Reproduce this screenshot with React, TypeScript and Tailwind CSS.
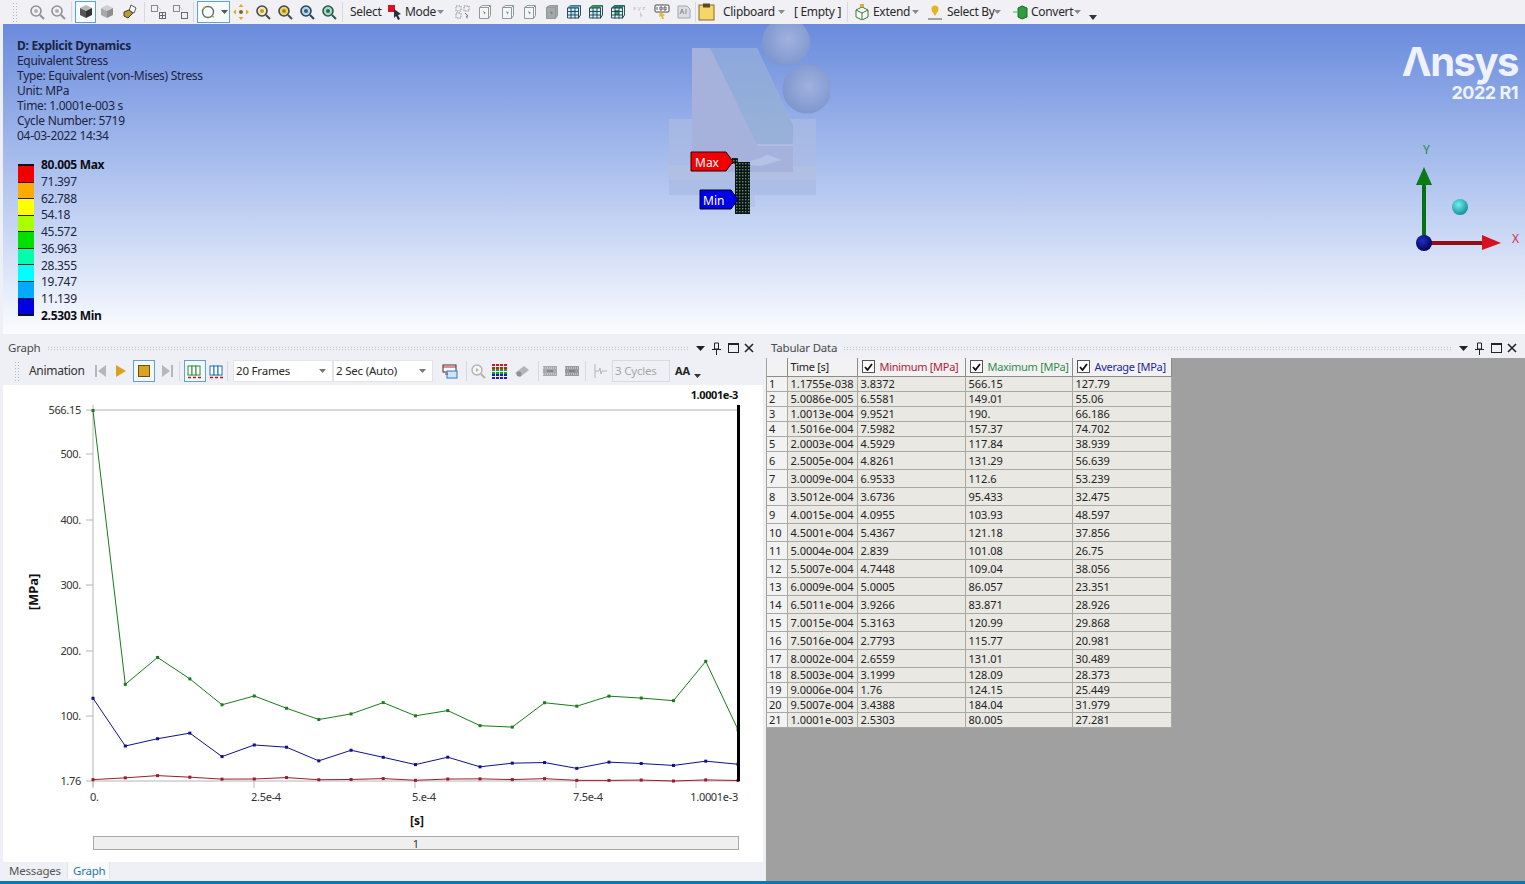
import React from 'react';

// time, min, max, avg
const rows: string[][] = [
  ['1.1755e-038', '3.8372', '566.15', '127.79'],
  ['5.0086e-005', '6.5581', '149.01', '55.06'],
  ['1.0013e-004', '9.9521', '190.', '66.186'],
  ['1.5016e-004', '7.5982', '157.37', '74.702'],
  ['2.0003e-004', '4.5929', '117.84', '38.939'],
  ['2.5005e-004', '4.8261', '131.29', '56.639'],
  ['3.0009e-004', '6.9533', '112.6', '53.239'],
  ['3.5012e-004', '3.6736', '95.433', '32.475'],
  ['4.0015e-004', '4.0955', '103.93', '48.597'],
  ['4.5001e-004', '5.4367', '121.18', '37.856'],
  ['5.0004e-004', '2.839', '101.08', '26.75'],
  ['5.5007e-004', '4.7448', '109.04', '38.056'],
  ['6.0009e-004', '5.0005', '86.057', '23.351'],
  ['6.5011e-004', '3.9266', '83.871', '28.926'],
  ['7.0015e-004', '5.3163', '120.99', '29.868'],
  ['7.5016e-004', '2.7793', '115.77', '20.981'],
  ['8.0002e-004', '2.6559', '131.01', '30.489'],
  ['8.5003e-004', '3.1999', '128.09', '28.373'],
  ['9.0006e-004', '1.76', '124.15', '25.449'],
  ['9.5007e-004', '3.4388', '184.04', '31.979'],
  ['1.0001e-003', '2.5303', '80.005', '27.281'],
];

const legend = [
  { v: '80.005 Max', bold: true },
  { v: '71.397' },
  { v: '62.788' },
  { v: '54.18' },
  { v: '45.572' },
  { v: '36.963' },
  { v: '28.355' },
  { v: '19.747' },
  { v: '11.139' },
  { v: '2.5303 Min', bold: true },
];

const legendColors = ['#f00000', '#ffaa00', '#ffff00', '#aaff00', '#00e000', '#00ffaa', '#00ffff', '#00aaff', '#0000e0'];

const px = (t: string) => 93 + (parseFloat(t) / 1.0001e-3) * 645;
const py = (v: string) => 781 - (parseFloat(v) - 1.76) * 0.6564;

const Svg = ({ children, w = 16, h = 16 }: { children: React.ReactNode; w?: number; h?: number }) => (
  <svg width={w} height={h} viewBox={`0 0 ${w} ${h}`} className="block shrink-0">
    {children}
  </svg>
);

const Slot = ({ children, className = 'w-[22px]' }: { children: React.ReactNode; className?: string }) => (
  <div className={`flex h-full shrink-0 items-center justify-center ${className}`}>{children}</div>
);

const Sep = ({ className = '' }: { className?: string }) => <div className={`h-[20px] w-px shrink-0 bg-[#d8d8de] ${className}`} />;

const Caret = ({ color = '#8a8a8a' }: { color?: string }) => (
  <svg width="7" height="4" viewBox="0 0 7 4" className="shrink-0">
    <path d="M0 0h7L3.5 4z" fill={color} />
  </svg>
);

const Grip = () => (
  <svg width="6" height="20" className="shrink-0">
    {[1, 4, 7, 10, 13, 16, 19].map((y) => (
      <g key={y} fill="#b9b9bf">
        <rect x="0" y={y} width="1" height="1" />
        <rect x="3" y={y} width="1" height="1" />
      </g>
    ))}
  </svg>
);

const Lens = ({ ring = '#8f9193', fill = '#f2f2f2', dot = '#b0b0b0' }: { ring?: string; fill?: string; dot?: string }) => (
  <Svg>
    <circle cx="7" cy="7" r="5" fill={fill} stroke={ring} strokeWidth="1.6" />
    <circle cx="7" cy="7" r="2" fill={dot} />
    <path d="M11 11l4 4" stroke={ring} strokeWidth="2" />
  </Svg>
);

const Cube = ({ top, left, right }: { top: string; left: string; right: string }) => (
  <Svg>
    <path d="M8 1l6 3-6 3-6-3z" fill={top} />
    <path d="M2 4l6 3v7l-6-3z" fill={left} />
    <path d="M14 4l-6 3v7l6-3z" fill={right} />
  </Svg>
);

const SelBoxes = ({ grid }: { grid?: boolean }) => (
  <Svg>
    <rect x="1.5" y="1.5" width="6" height="6" fill="none" stroke="#8a8a8a" />
    <path d="M8 3l3 3" stroke="#c8c8c8" />
    <rect x="9.5" y="8.5" width="6" height="6" fill="none" stroke="#6a6a6a" />
    {grid && <path d="M12.5 8.5v6M9.5 11.5h6" stroke="#6a6a6a" />}
  </Svg>
);

const PageIcon = ({ fill = '#f4f6f6' }: { fill?: string }) => (
  <Svg>
    <path d="M2.5 3.5l3-2h8v10l-2 3h-9z" fill={fill} stroke="#8f9a9a" />
    <path d="M2.5 3.5h9v11M11.5 3.5l2-2" fill="none" stroke="#8f9a9a" />
    <path d="M6 7l3 2-1.5.5.5 2z" fill="#707070" />
  </Svg>
);

const MeshIcon = ({ top, mid }: { top: string; mid: string }) => (
  <Svg>
    <path d="M1.5 4l3-2.5h10v9.5l-2 3h-11z" fill="#dcecf4" stroke="#25545a" />
    <path d="M1.5 4l3-2.5h10l-2 2.5z" fill={top} />
    <rect x="5" y="6" width="4" height="5" fill={mid} />
    <path d="M5 4v10.5M9 4v10.5M1.5 7.5h11M1.5 11h11M12.5 4v10.5M1.5 4h11" stroke="#173f4a" strokeWidth="0.9" />
  </Svg>
);

const Frames = ({ c }: { c: string }) => (
  <Svg>
    <rect x="1" y="3" width="4" height="9" fill="#fff" stroke={c} />
    <rect x="5" y="3" width="4" height="9" fill="#fff" stroke={c} />
    <rect x="9" y="3" width="4" height="9" fill="#fff" stroke={c} />
    <path d="M1 14.5h3M6 14.5h3M11 14.5h3" stroke="#c01818" strokeWidth="1.4" />
  </Svg>
);

const Tool = ({ children, className = '' }: { children: React.ReactNode; className?: string }) => (
  <span className={`shrink-0 whitespace-nowrap text-[12px] leading-none tracking-[-0.3px] text-[#2a2a2a] ${className}`}>{children}</span>
);

const TopBar = () => (
  <div className="flex h-[24px] shrink-0 items-center bg-[#f0f0f5] pl-[13px]">
    <Grip />
    <div className="w-[7px] shrink-0" />
    <Slot className="w-[21px]"><Lens /></Slot>
    <Slot className="w-[22px]"><Lens /></Slot>
    <Sep className="ml-[2px]" />
    <div className="ml-[3px] flex h-[22px] w-[21px] shrink-0 items-center justify-center border border-[#5fa3cf] bg-[#f6fbfe]">
      <Cube top="#b8b8b8" left="#555555" right="#333333" />
    </div>
    <Slot><Cube top="#cfcfcf" left="#a9a9a9" right="#8e8e8e" /></Slot>
    <Slot className="w-[24px]">
      <Svg>
        <path d="M9 1l5 3-2 5-5-2z" fill="#fff" stroke="#555" />
        <path d="M2 8l5-2 4 3-5 5-4-2z" fill="#b99a3a" stroke="#4a3d18" />
      </Svg>
    </Slot>
    <Sep className="ml-[2px]" />
    <div className="w-[2px] shrink-0" />
    <Slot><SelBoxes grid /></Slot>
    <Slot><SelBoxes /></Slot>
    <Sep className="ml-[2px]" />
    <div className="ml-[3px] flex h-[22px] w-[33px] shrink-0 items-center gap-[5px] border border-[#5fa3cf] bg-[#f6fbfe] pl-[2px]">
      <Svg>
        <circle cx="8" cy="8" r="5.5" fill="none" stroke="#6f6f6f" strokeWidth="1.4" />
        <path d="M3 5l2-2M12 12l2 1" stroke="#c5a53a" strokeWidth="1.6" />
      </Svg>
      <Caret color="#555" />
    </div>
    <Slot>
      <Svg>
        <circle cx="8" cy="8" r="2" fill="#7a6a2a" />
        <path d="M8 0l2.5 3h-5zM8 16l-2.5-3h5zM0 8l3-2.5v5zM16 8l-3 2.5v-5z" fill="#e0aa20" />
      </Svg>
    </Slot>
    <Slot><Lens ring="#3f4a4a" fill="#f3e6b8" dot="#c89a20" /></Slot>
    <Slot><Lens ring="#3f4a4a" fill="#f2d36b" dot="#a88410" /></Slot>
    <Slot><Lens ring="#28445a" fill="#b9d2e6" dot="#2e5f88" /></Slot>
    <Slot><Lens ring="#2b5a4a" fill="#a9d8c5" dot="#25705a" /></Slot>
    <Sep className="ml-[2px]" />
    <Tool className="ml-[7px] w-[33px]">Select</Tool>
    <Slot className="ml-[3px] w-[18px]">
      <Svg>
        <rect x="1" y="1" width="7" height="7" fill="#e01020" />
        <path d="M7 5l7 5-3 1 2 4-2 1-2-4-2 2z" fill="#26303a" />
      </Svg>
    </Slot>
    <Tool className="ml-px w-[32px]">Mode</Tool>
    <Caret />
    <Slot className="ml-[8px] w-[22px]">
      <Svg>
        <path d="M1 2h5v5H1zM9 2h5v5H9zM1 9h5v5H1z" fill="none" stroke="#8a9090" strokeDasharray="1.5 1" />
        <path d="M10 9l3 3-1.5.3.7 2" stroke="#6a6a6a" fill="none" />
      </Svg>
    </Slot>
    <Slot><PageIcon /></Slot>
    <Slot className="w-[23px]"><PageIcon /></Slot>
    <Slot><PageIcon /></Slot>
    <Slot><PageIcon fill="#a5a8a8" /></Slot>
    <Slot><MeshIcon top="#4fa3c8" mid="#a8d8f0" /></Slot>
    <Slot><MeshIcon top="#3f9d5a" mid="#a8d8f0" /></Slot>
    <Slot><MeshIcon top="#2f7a6a" mid="#3f9d5a" /></Slot>
    <Slot>
      <Svg>
        <text x="1" y="6" fontSize="6" fill="#b5b5b5" fontFamily="Liberation Sans">x y z</text>
        <path d="M8 7l3 6-2-1-1 3z" fill="#cfcfcf" />
      </Svg>
    </Slot>
    <Slot>
      <Svg>
        <rect x="1" y="1" width="14" height="7" rx="1" fill="#fff" stroke="#444" />
        <path d="M3 3v3M6 3h2v3H6zM10 3h2v3h-2z" stroke="#333" fill="none" strokeWidth="0.8" />
        <path d="M6 8l5 3-2 1 1 3-2 0-1-3-2 1z" fill="#e2b92f" />
      </Svg>
    </Slot>
    <Slot>
      <Svg>
        <path d="M2 2h9l3 3v9H2z" fill="#dcdce2" stroke="#a5a5ac" />
        <path d="M4 10l2-5 2 5M10 5v5M5 8h2" stroke="#8f8f98" fill="none" />
      </Svg>
    </Slot>
    <Sep />
    <Slot className="w-[20px]">
      <Svg w={17} h={18}>
        <rect x="1" y="2" width="15" height="15" fill="#f6d56a" stroke="#8a6a1a" />
        <rect x="5" y="0.5" width="7" height="4" fill="#5a4a20" />
      </Svg>
    </Slot>
    <Tool className="ml-[7px] w-[53px]">Clipboard</Tool>
    <div className="w-[2px] shrink-0" />
    <Caret />
    <Tool className="ml-[9px] w-[49px]">[ Empty ]</Tool>
    <Sep className="ml-[4px]" />
    <Slot className="ml-[5px] w-[18px]">
      <Svg>
        <path d="M2 6l6-3 6 3v7l-6 3-6-3z" fill="#fff" stroke="#2e7d32" />
        <path d="M2 6l6 3 6-3M8 9v7" stroke="#2e7d32" fill="none" />
        <path d="M6 0h4v3H6z" fill="#e0b030" />
      </Svg>
    </Slot>
    <Tool className="ml-[2px] w-[37px]">Extend</Tool>
    <div className="w-[2px] shrink-0" />
    <Caret />
    <Slot className="ml-[7px] w-[18px]">
      <Svg>
        <circle cx="8" cy="5" r="3.5" fill="#e6b422" />
        <path d="M5 7l3 5 3-5z" fill="#e6b422" />
        <path d="M1 15h14" stroke="#555" />
      </Svg>
    </Slot>
    <Tool className="ml-[3px] w-[47px]">Select By</Tool>
    <Caret />
    <Slot className="ml-[11px] w-[18px]">
      <Svg>
        <path d="M0 8h4" stroke="#7cc478" strokeWidth="1.4" />
        <path d="M5 4l4-2 5 2v9l-5 2-4-2z" fill="#2f9e3f" stroke="#1a6a28" />
      </Svg>
    </Slot>
    <Tool className="ml-px w-[41px]">Convert</Tool>
    <div className="w-[2px] shrink-0" />
    <Caret />
    <div className="ml-[8px] mt-[10px] flex flex-col items-center gap-px">
      <svg width="8" height="5" viewBox="0 0 8 5"><path d="M0 0h8L4 5z" fill="#333" /></svg>
    </div>
  </div>
);

const Model = () => (
  <svg width="170" height="196" viewBox="660 24 170 196" className="absolute left-[657px] top-0">
    <defs>
      <radialGradient id="ball" cx="0.55" cy="0.45" r="0.6">
        <stop offset="0" stopColor="#a0b1df" />
        <stop offset="1" stopColor="#7d95cd" />
      </radialGradient>
      <pattern id="mesh" width="3" height="3" patternUnits="userSpaceOnUse">
        <rect width="3" height="3" fill="#0c1416" />
        <rect x="1" y="1" width="1.4" height="1.4" fill="#5b8a66" />
      </pattern>
      <linearGradient id="plateR" x1="0" y1="0" x2="0" y2="1">
        <stop offset="0" stopColor="#8ca8dc" />
        <stop offset="1" stopColor="#9ab2d8" />
      </linearGradient>
    </defs>
    <path d="M669 119h147v76H669z" fill="#a9bbe3" fillOpacity="0.75" />
    <path d="M668 165l1 15h147v-14z" fill="#b0bfe2" />
    <path d="M692 48h65l36 77v47H692z" fill="#a7b2dc" />
    <path d="M710 48h47l36 77v20h-36z" fill="url(#plateR)" />
    <path d="M757 145h36" stroke="#bcc6e4" strokeWidth="1" fill="none" />
    <path d="M742 164l26-9 14 5-22 6z" fill="#b5c2e6" />
    <rect x="724" y="195" width="31" height="12" fill="#b5c3e6" />
    <circle cx="786" cy="42" r="24" fill="url(#ball)" />
    <circle cx="807" cy="89" r="24.5" fill="url(#ball)" />
    <rect x="735" y="162" width="15" height="52" fill="url(#mesh)" />
    <rect x="732" y="158" width="6" height="6" fill="url(#mesh)" />
    <path d="M691 152h35l7 9.5-7 9.5h-35z" fill="#f00000" stroke="#300" />
    <path d="M700 190h31l7 9.5-7 9.5h-31z" fill="#0000e6" stroke="#003" />
    <text x="695" y="167" fontSize="12" fill="#fff" fontFamily="Noto Sans, sans-serif">Max</text>
    <text x="703" y="205" fontSize="12" fill="#fff" fontFamily="Noto Sans, sans-serif">Min</text>
  </svg>
);

const Triad = () => (
  <svg width="115" height="115" viewBox="1410 140 115 115" className="absolute left-[1407px] top-[116px]">
    <defs>
      <radialGradient id="cy" cx="0.4" cy="0.35" r="0.7">
        <stop offset="0" stopColor="#6ff0f0" />
        <stop offset="1" stopColor="#0e8a94" />
      </radialGradient>
      <radialGradient id="bl" cx="0.4" cy="0.35" r="0.7">
        <stop offset="0" stopColor="#2030c0" />
        <stop offset="1" stopColor="#000050" />
      </radialGradient>
    </defs>
    <text x="1423" y="154" fontSize="12" fill="#1f8a3f" fontFamily="Noto Sans, sans-serif">Y</text>
    <text x="1512" y="243" fontSize="12" fill="#d0304a" fontFamily="Noto Sans, sans-serif">X</text>
    <rect x="1422" y="184" width="4" height="56" fill="#0a6e14" />
    <path d="M1424 167l8 18h-16z" fill="#0b7a18" />
    <rect x="1430" y="241" width="54" height="4" fill="#8f0d14" />
    <path d="M1482 235l19 8-19 7z" fill="#d81020" />
    <circle cx="1424" cy="243" r="8" fill="url(#bl)" />
    <circle cx="1460" cy="207" r="8" fill="url(#cy)" />
  </svg>
);

const Viewport = () => (
  <div className="relative ml-[3px] h-[310px] shrink-0 overflow-hidden bg-gradient-to-b from-[#6a8bdc] to-[#fbfcfe] font-['Noto_Sans',sans-serif]">
    <div className="absolute left-[14px] top-[14px] text-[12px] leading-[15px] tracking-[-0.3px] text-[#1b2440]">
      <div className="font-bold">D: Explicit Dynamics</div>
      <div>Equivalent Stress</div>
      <div>Type: Equivalent (von-Mises) Stress</div>
      <div>Unit: MPa</div>
      <div>Time: 1.0001e-003 s</div>
      <div>Cycle Number: 5719</div>
      <div>04-03-2022 14:34</div>
    </div>
    <div className="absolute left-[15px] top-[133px] flex gap-[7px]">
      <div className="mt-[7px] flex h-[152px] w-[16px] flex-col border-y-[2px] border-[#101018]">
        {legendColors.map((c, i) => (
          <div key={i} className="flex-1 border-b border-[#222] last:border-b-0" style={{ background: c }} />
        ))}
      </div>
      <div className="flex h-[167px] flex-col justify-between text-[12px] leading-[16px] tracking-[-0.3px] text-[#1b2440]">
        {legend.map((l) => (
          <div key={l.v} className={l.bold ? 'font-bold text-[#0c0c14]' : ''}>{l.v}</div>
        ))}
      </div>
    </div>
    <Model />
    <div className="absolute right-[7px] top-[16px] flex flex-col items-end text-[#eef2fc]">
      <div className="font-['Inter',sans-serif] text-[40px] font-bold leading-[44px] tracking-[-1.5px]">Λnsys</div>
      <div className="font-['Inter',sans-serif] text-[18px] font-bold leading-[18px] tracking-[-0.5px]">2022 R1</div>
    </div>
    <Triad />
  </div>
);

const PanelHeader = ({ title, pad }: { title: string; pad: string }) => (
  <div className={`flex h-[20px] shrink-0 items-center text-[11.5px] tracking-[-0.2px] text-[#4a4a4a] ${pad}`}>
    <span className="ml-[5px] shrink-0">{title}</span>
    <div className="ml-[6px] h-[5px] flex-1 bg-[radial-gradient(#b5b5ba_0.6px,transparent_0.7px)] bg-[length:3px_2.5px]" />
    <div className="ml-[4px] flex shrink-0 items-center">
      <Slot className="w-[16px]"><svg width="9" height="5"><path d="M0 0h9L4.5 5z" fill="#222" /></svg></Slot>
      <Slot className="w-[17px]">
        <svg width="9" height="13" viewBox="0 0 9 13" fill="none" stroke="#222">
          <path d="M2.5 1h4v6h-4zM0 7.5h9M4.5 8v5" />
        </svg>
      </Slot>
      <Slot className="w-[16px]"><div className="h-[10px] w-[11px] border border-t-2 border-[#222]" /></Slot>
      <Slot className="w-[16px]">
        <svg width="10" height="10" stroke="#222" strokeWidth="1.6"><path d="M1 1l8 8M9 1l-8 8" /></svg>
      </Slot>
    </div>
  </div>
);

const Select = ({ label, w }: { label: string; w: string }) => (
  <div className={`flex h-[22px] shrink-0 items-center justify-between border border-[#e4e4e8] bg-white pl-[2px] pr-[6px] text-[11.5px] tracking-[-0.2px] text-[#2a2a2a] ${w}`}>
    <span>{label}</span>
    <svg width="7" height="4"><path d="M0 0h7L3.5 4z" fill="#777" /></svg>
  </div>
);

const AnimBar = () => (
  <div className="flex h-[26px] shrink-0 items-center pl-[12px] text-[12px]">
    <Grip />
    <Tool className="ml-[8px] w-[60px] text-[#333]">Animation</Tool>
    <Slot className="ml-[2px] w-[18px]">
      <Svg>
        <path d="M3 2h2v12H3zM14 2v12L6 8z" fill="#b5b5bb" />
      </Svg>
    </Slot>
    <Slot className="ml-[4px] w-[16px]">
      <Svg><path d="M3 2l10 6-10 6z" fill="#d9a321" /></Svg>
    </Slot>
    <div className="ml-[4px] flex h-[22px] w-[22px] shrink-0 items-center justify-center border border-[#5fa3cf] bg-[#f2f8fc]">
      <div className="h-[12px] w-[12px] border border-[#6a5212] bg-[#d9a321]" />
    </div>
    <Slot className="ml-[2px] w-[22px]">
      <Svg><path d="M2 2l8 6-8 6zM11 2h2v12h-2z" fill="#b5b5bb" /></Svg>
    </Slot>
    <Sep className="mr-[4px]" />
    <div className="flex h-[22px] w-[22px] shrink-0 items-center justify-center border border-[#5fa3cf] bg-[#f2f8fc]">
      <Frames c="#2a8a3a" />
    </div>
    <Slot className="w-[21px]"><Frames c="#1f6fa8" /></Slot>
    <Sep className="mr-[5px]" />
    <Select label="20 Frames" w="w-[100px]" />
    <Select label="2 Sec (Auto)" w="w-[100px]" />
    <Slot className="ml-[6px] w-[22px]">
      <Svg>
        <rect x="1" y="2" width="13" height="7" fill="#fff" stroke="#333" />
        <path d="M1 4h13" stroke="#c02020" />
        <rect x="5" y="8" width="10" height="7" fill="#cfe4f7" stroke="#2d78c0" />
        <path d="M3 11h3" stroke="#b03030" />
      </Svg>
    </Slot>
    <Sep className="ml-[5px]" />
    <Slot className="w-[21px]">
      <Svg>
        <circle cx="7" cy="7" r="5" fill="#f6f6f6" stroke="#b2b2b6" strokeWidth="1.4" />
        <path d="M6 5l3 2-3 2z" fill="#b2b2b6" />
        <path d="M11 11l4 4" stroke="#b2b2b6" strokeWidth="2" />
      </Svg>
    </Slot>
    <Slot className="w-[23px]">
      <svg width="15" height="15">
        <rect x="0" y="0" width="15" height="5" fill="#d01818" />
        <rect x="0" y="5" width="15" height="5" fill="#18a028" />
        <rect x="0" y="10" width="15" height="5" fill="#1818c8" />
        <path d="M3.5 0v15M7.5 0v15M11.5 0v15M0 2.5h15M0 7.5h15M0 12.5h15" stroke="#f0f0f5" strokeWidth="1" />
      </svg>
    </Slot>
    <Slot>
      <Svg>
        <path d="M1 10l9-7 5 4-9 7z" fill="#b4b4ba" />
        <circle cx="5" cy="11" r="2.5" fill="#8f8f95" />
      </Svg>
    </Slot>
    <Sep className="ml-[5px]" />
    <Slot className="w-[22px]">
      <Svg><rect x="1" y="3" width="14" height="10" fill="#a9a9ad" /><path d="M1 5h14M1 11h14" stroke="#e6e6e6" strokeDasharray="1 1" /><path d="M5 8h6" stroke="#666" /></Svg>
    </Slot>
    <Slot>
      <Svg><rect x="1" y="3" width="14" height="10" fill="#9a9a9e" /><path d="M1 5h14M1 11h14" stroke="#e6e6e6" strokeDasharray="1 1" /><path d="M5 8h6" stroke="#666" /></Svg>
    </Slot>
    <Sep className="ml-[2px]" />
    <Slot className="ml-[2px] w-[24px]">
      <Svg><path d="M3 1v14M3 8h4l1-3 1 6 1-3h5" stroke="#b5b5b9" fill="none" /></Svg>
    </Slot>
    <div className="flex h-[22px] w-[58px] shrink-0 items-center border border-[#dadade] pl-[2px] text-[11.5px] tracking-[-0.2px] text-[#a6a6a6]">3 Cycles</div>
    <span className="ml-[5px] w-[18px] shrink-0 text-[11px] font-bold text-[#222]">AA</span>
    <svg width="7" height="4" className="ml-[1px] mt-[9px]"><path d="M0 0h7L3.5 4z" fill="#333" /></svg>
  </div>
);

const series = (k: number) => rows.map((r) => [px(r[0]), py(r[k])] as const);

const Series = ({ k, color }: { k: number; color: string }) => {
  const pts = series(k);
  return (
    <g>
      <polyline points={pts.map((p) => p.join(',')).join(' ')} fill="none" stroke={color} strokeWidth="1" />
      {pts.map((p, i) => (
        <rect key={i} x={p[0] - 1.5} y={p[1] - 1.5} width="3" height="3" fill={color} />
      ))}
    </g>
  );
};

const Chart = () => {
  const yTicks: [number, string][] = [[410, '566.15'], [454, '500.'], [520, '400.'], [585, '300.'], [651, '200.'], [716, '100.'], [781, '1.76']];
  const xTicks: [number, string][] = [[93, '0.'], [254, '2.5e-4'], [415, '5.e-4'], [576, '7.5e-4']];
  return (
    <svg width="759" height="444" viewBox="3 385 759 444" className="block font-['Noto_Sans',sans-serif]">
      <path d="M93 410h645M93 781h645M93 405v381" stroke="#b4b4b4" fill="none" />
      {yTicks.map(([y, l]) => (
        <g key={l}>
          <path d={`M86 ${y}h7`} stroke="#b4b4b4" />
          <text x="81" y={y + 4} fontSize="11" textAnchor="end" letterSpacing="-0.3" fill="#333">{l}</text>
        </g>
      ))}
      {xTicks.map(([x, l]) => (
        <g key={l}>
          <path d={`M${x} 781v7`} stroke="#b4b4b4" />
          <text x={l === '0.' ? 90 : x - 3} y="801" fontSize="11" letterSpacing="-0.3" fill="#333">{l}</text>
        </g>
      ))}
      <text x="738" y="801" fontSize="11" textAnchor="end" letterSpacing="-0.3" fill="#333">1.0001e-3</text>
      <text x="738" y="399" fontSize="11" fontWeight="700" textAnchor="end" letterSpacing="-0.4" fill="#111">1.0001e-3</text>
      <Series k={2} color="#1c7a1c" />
      <Series k={3} color="#10108a" />
      <Series k={1} color="#9a1c2c" />
      <rect x="737" y="405" width="3" height="376" fill="#000" />
      <text x="417" y="825" fontSize="12" fontWeight="700" textAnchor="middle" fill="#111">[s]</text>
      <text transform="translate(38 592) rotate(-90)" fontSize="13" fontWeight="700" textAnchor="middle" fill="#111">[MPa]</text>
    </svg>
  );
};

const GraphPanel = () => (
  <div className="flex w-[763px] shrink-0 flex-col pl-[3px]">
    <PanelHeader title="Graph" pad="pr-[6px]" />
    <AnimBar />
    <div className="mt-px flex h-[477px] flex-col bg-white">
      <Chart />
      <div className="ml-[90px] mt-[7px] flex h-[14px] w-[646px] items-center justify-center border border-[#a8a8a8] bg-[#efefef] text-[11px] leading-none text-[#333]">1</div>
    </div>
    <div className="flex h-[19px] items-center pb-[2px] text-[11.5px] tracking-[-0.2px]">
      <div className="flex h-full w-[64px] items-center pl-[6px] text-[#555]">Messages</div>
      <div className="flex h-full w-[43px] items-center border-x border-[#dfe3ea] bg-[#f8fafc] pl-[5px] text-[#2b74ad]">Graph</div>
    </div>
  </div>
);

const HeadCheck = ({ label, color }: { label: string; color: string }) => (
  <div className="flex h-full items-center gap-[5px] whitespace-nowrap pl-[4px]">
    <div className="flex h-[13px] w-[13px] shrink-0 items-center justify-center border border-[#555] bg-white">
      <svg width="9" height="8" fill="none" stroke="#111" strokeWidth="1.8"><path d="M1 4l2.5 3L8 1" /></svg>
    </div>
    <span className={color}>{label}</span>
  </div>
);

const TabularPanel = () => (
  <div className="ml-[3px] flex min-w-0 flex-1 flex-col">
    <PanelHeader title="Tabular Data" pad="pr-[5px]" />
    <div className="flex-1 bg-[#a0a0a0] pl-px">
      <table className="w-[404px] table-fixed border-collapse text-[11px] leading-none text-[#222]">
        <colgroup>
          <col className="w-[20px]" />
          <col className="w-[70px]" />
          <col className="w-[108px]" />
          <col className="w-[107px]" />
          <col className="w-[99px]" />
        </colgroup>
        <thead>
          <tr className="h-[18px] bg-[#f2f2f2] text-left tracking-[-0.3px]">
            <th className="border-r border-b border-[#8c8c8c] p-0" />
            <th className="border-r border-b border-[#8c8c8c] p-0 pl-[3px] font-normal">Time [s]</th>
            <th className="border-r border-b border-[#8c8c8c] p-0 font-normal"><HeadCheck label="Minimum [MPa]" color="text-[#b3203f]" /></th>
            <th className="border-r border-b border-[#8c8c8c] p-0 font-normal"><HeadCheck label="Maximum [MPa]" color="text-[#33894e]" /></th>
            <th className="border-r border-b border-[#8c8c8c] p-0 font-normal"><HeadCheck label="Average [MPa]" color="text-[#2323a8]" /></th>
          </tr>
        </thead>
        <tbody>
          {rows.map((r, i) => (
            <tr key={i} className={i >= 5 && i < 17 ? 'h-[18px] bg-[#e9e8e2]' : 'h-[15px] bg-[#e9e8e2]'}>
              <td className="border-r border-b border-[#a9a9a3] bg-[#f2f2f2] p-0 pl-[2px]">{i + 1}</td>
              {r.map((c, j) => (
                <td key={j} className="border-r border-b border-[#a9a9a3] p-0 pl-[3px]">{c}</td>
              ))}
            </tr>
          ))}
        </tbody>
      </table>
    </div>
  </div>
);

export default function App() {
  return (
    <div className="flex h-[884px] w-[1525px] flex-col overflow-hidden bg-[#eef0f5] font-['Noto_Sans',sans-serif]">
      <TopBar />
      <Viewport />
      <div className="mt-[4px] flex min-h-0 flex-1">
        <GraphPanel />
        <TabularPanel />
      </div>
      <div className="h-[3px] shrink-0 bg-[#0f74b8]" />
    </div>
  );
}
